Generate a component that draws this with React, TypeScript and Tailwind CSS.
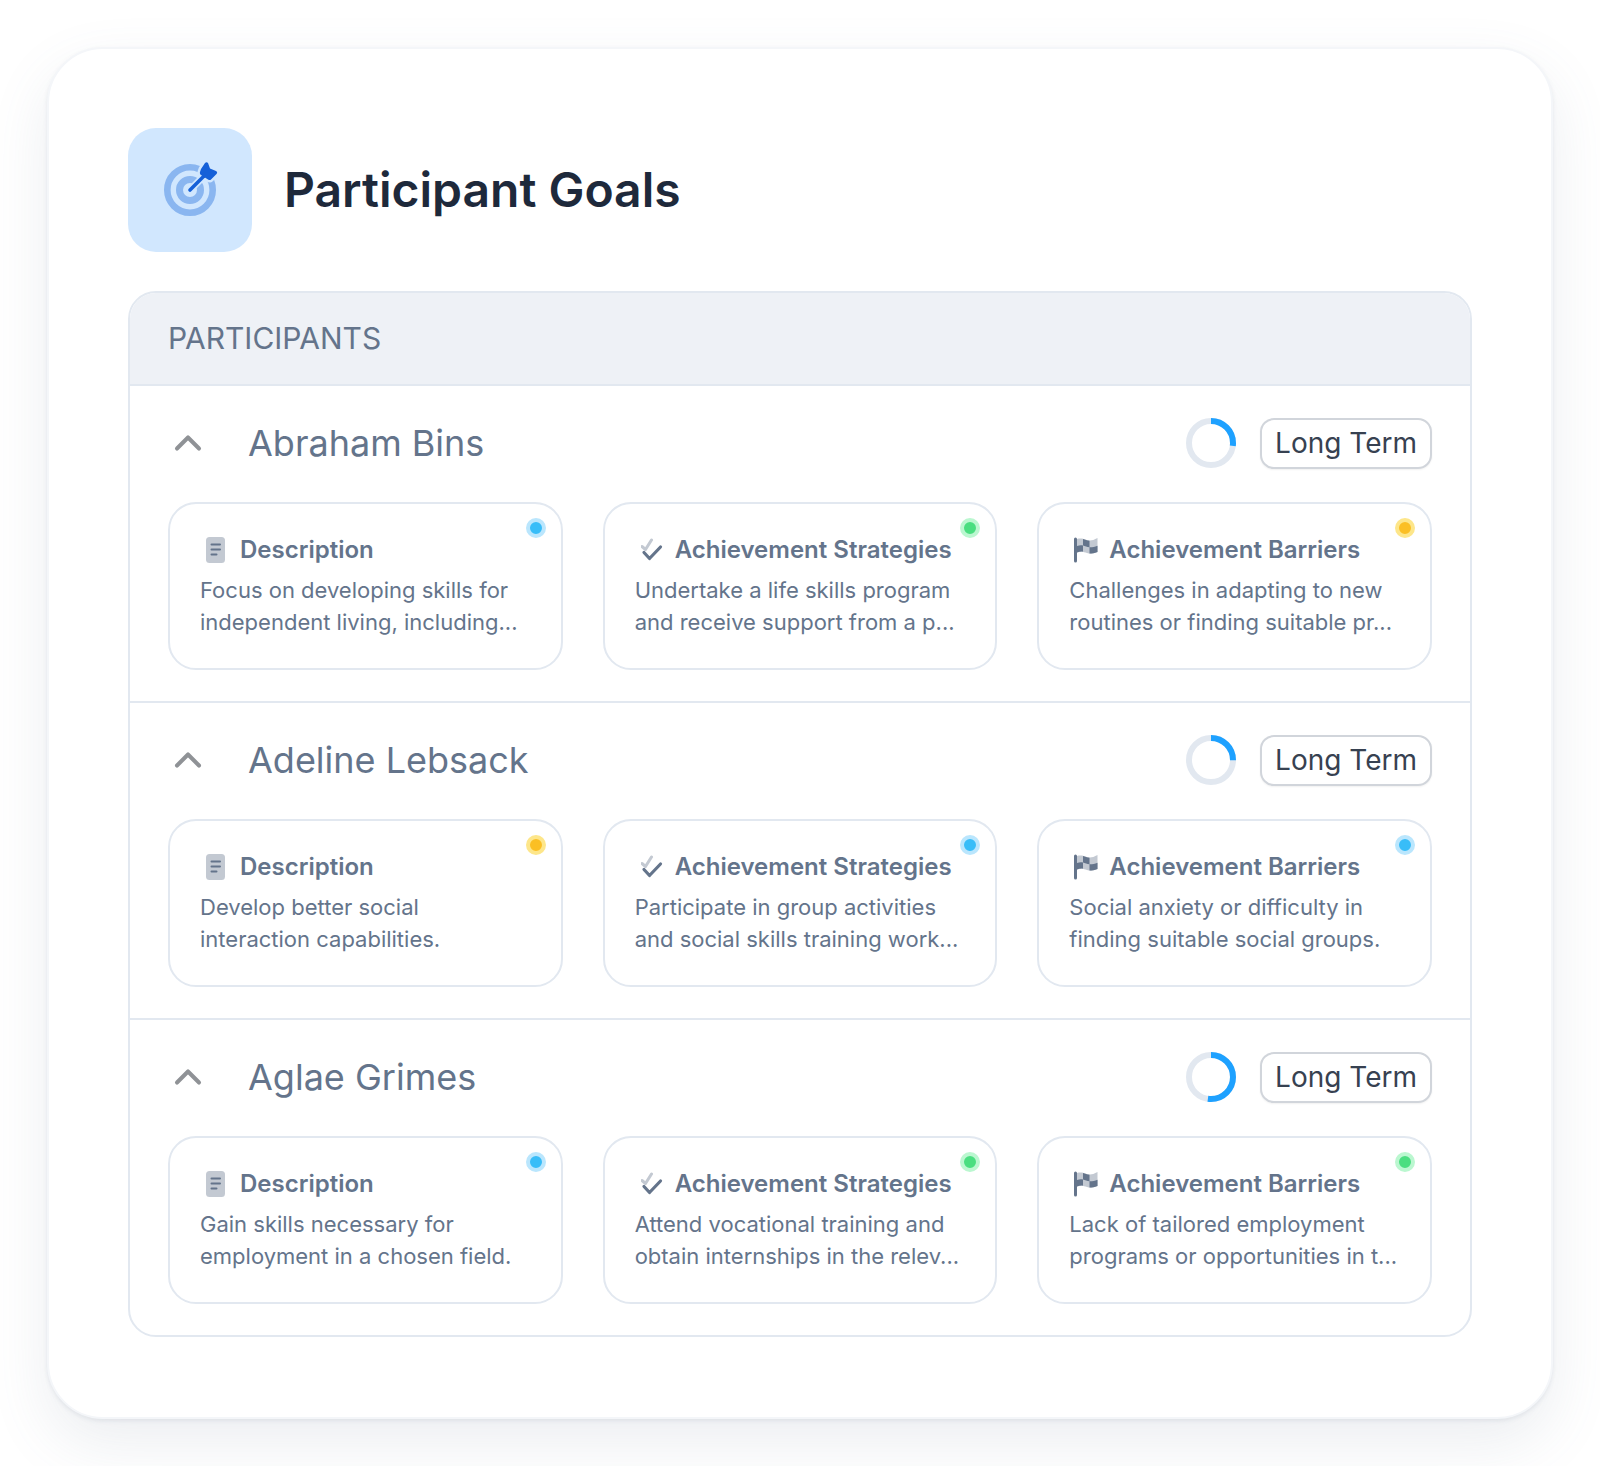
import { ChevronUp } from "lucide-react";

type Tone = "blue" | "green" | "amber";

type Participant = {
  name: string;
  progress: number;
  description: { text: string; tone: Tone };
  strategies: { text: string; tone: Tone };
  barriers: { text: string; tone: Tone };
};

const participants: Participant[] = [
  {
    name: "Abraham Bins",
    progress: 27,
    description: { text: "Focus on developing skills for independent living, including...", tone: "blue" },
    strategies: { text: "Undertake a life skills program and receive support from a p...", tone: "green" },
    barriers: { text: "Challenges in adapting to new routines or finding suitable pr...", tone: "amber" },
  },
  {
    name: "Adeline Lebsack",
    progress: 25,
    description: { text: "Develop better social interaction capabilities.", tone: "amber" },
    strategies: { text: "Participate in group activities and social skills training work...", tone: "blue" },
    barriers: { text: "Social anxiety or difficulty in finding suitable social groups.", tone: "blue" },
  },
  {
    name: "Aglae Grimes",
    progress: 52,
    description: { text: "Gain skills necessary for employment in a chosen field.", tone: "blue" },
    strategies: { text: "Attend vocational training and obtain internships in the relev...", tone: "green" },
    barriers: { text: "Lack of tailored employment programs or opportunities in t...", tone: "green" },
  },
];

const dotClasses: Record<Tone, string> = {
  blue: "bg-[#38bdf8] border-[#bae6fd]",
  green: "bg-[#4ade80] border-[#bbf7d0]",
  amber: "bg-[#fbbf24] border-[#fde68a]",
};

function TargetIcon() {
  return (
    <svg width="56" height="56" viewBox="0 0 56 56" fill="none">
      <circle cx="28" cy="28" r="22.7" stroke="#8ab6f0" strokeWidth="6.6" />
      <circle cx="28" cy="28" r="10.5" stroke="#8ab6f0" strokeWidth="7" />
      <path
        d="M39 7L43 1Q44.5 -0.3 46 1L48 6.5L54 9Q56 10 54.5 12L49 17.5Q48 18.5 46 17.5L39 13Q37.5 12 38 10Z"
        fill="#1560d8"
        stroke="#d1e7fe"
        strokeWidth="5"
      />
      <path d="M28 28L42 14" stroke="#d1e7fe" strokeWidth="7" strokeLinecap="round" />
      <path d="M28 28L42 14" stroke="#1560d8" strokeWidth="3.6" strokeLinecap="round" />
      <path
        d="M39 7L43 1Q44.5 -0.3 46 1L48 6.5L54 9Q56 10 54.5 12L49 17.5Q48 18.5 46 17.5L39 13Q37.5 12 38 10Z"
        fill="#1560d8"
      />
    </svg>
  );
}

function DocIcon() {
  return (
    <svg width="20" height="26" viewBox="0 0 20 26" fill="none">
      <rect x="0" y="0" width="19" height="26" rx="3.5" fill="#c3c9d2" />
      <path d="M5.5 7.5H14M5.5 12.5H14M5.5 17.5H10.5" stroke="#64748b" strokeWidth="2" strokeLinecap="round" />
    </svg>
  );
}

function CheckIcon() {
  return (
    <svg width="22" height="24" viewBox="0 0 22 24" fill="none">
      <path d="M1 8.5L4.5 11.5L10.5 2" stroke="#c3c9d2" strokeWidth="3" strokeLinecap="round" strokeLinejoin="round" />
      <path d="M3 14.5L8.5 20.5L19.5 9" stroke="#64748b" strokeWidth="3.2" strokeLinecap="round" strokeLinejoin="round" />
    </svg>
  );
}

function FlagIcon() {
  return (
    <svg width="26" height="26" viewBox="0 0 26 26" fill="none">
      <path d="M2.5 2V24" stroke="#64748b" strokeWidth="3" strokeLinecap="round" />
      <path d="M4 2C8 1 11 2 14 3C17 4 20 3.5 24.5 1V15C20 17 17 17 14 16C11 15 8 14 4 15.5V2Z" fill="#c3c9d2" />
      <path d="M10 2V8.5C12 9 14 10 16.5 10.3V16.6C19 16.5 21.5 16 24.5 15V8.8C21.5 10 19 10.4 16.5 10.3V3.8C14 3.5 12 2.4 10 2Z" fill="#64748b" />
      <path d="M4 9C6.5 8 8.5 8 10 8.5V14.7C8 14.4 6 14.8 4 15.5V9Z" fill="#64748b" />
    </svg>
  );
}

function ProgressRing({ value }: { value: number }) {
  const r = 22;
  const c = 2 * Math.PI * r;
  return (
    <svg width="50" height="50" viewBox="0 0 50 50" fill="none" className="-rotate-90">
      <circle cx="25" cy="25" r={r} stroke="#e2e8f0" strokeWidth="6" />
      <circle cx="25" cy="25" r={r} stroke="#1ea1ff" strokeWidth="6" strokeDasharray={`${(c * value) / 100} ${c}`} />
    </svg>
  );
}

function InfoCard({
  icon,
  iconClass,
  title,
  text,
  tone,
}: {
  icon: React.ReactNode;
  iconClass: string;
  title: string;
  text: string;
  tone: Tone;
}) {
  return (
    <div className="relative h-[168px] rounded-[28px] border-2 border-[#e2e8f0] bg-white px-[30px] pt-[28px]">
      <span className={`absolute right-[15px] top-[14px] h-[20px] w-[20px] rounded-full border-4 ${dotClasses[tone]}`} />
      <div className="flex h-[36px] items-center">
        <span className={`flex justify-center ${iconClass}`}>{icon}</span>
        <h3 className="text-[24px] font-semibold leading-[36px] text-[#64748b]">{title}</h3>
      </div>
      <p className="mt-[6px] text-[22px] leading-[32px] text-[#64748b]">{text}</p>
    </div>
  );
}

export default function App() {
  return (
    <div className="min-h-[1466px] bg-white px-[47px] pb-[47px] pt-[47px] font-['Inter',sans-serif] [font-optical-sizing:none]">
      <div className="h-[1372px] rounded-[56px] border-2 border-[#f4f6f9] bg-white px-[79px] pt-[79px] shadow-[0_24px_60px_rgba(100,116,139,0.12),0_2px_4px_rgba(100,116,139,0.12)]">
        <div className="flex items-center gap-[32px]">
          <div className="flex h-[124px] w-[124px] items-center justify-center rounded-[28px] bg-[#d1e7fe]">
            <TargetIcon />
          </div>
          <h1 className="text-[48px] font-semibold leading-[60px] text-[#1e293b]">Participant Goals</h1>
        </div>

        <div className="mt-[39px] overflow-hidden rounded-[28px] border-2 border-[#e2e8f0]">
          <div className="flex h-[93px] items-center border-b-2 border-[#e2e8f0] bg-[#eef1f6] px-[38px]">
            <span className="text-[30px] font-normal text-[#64748b]">PARTICIPANTS</span>
          </div>

          {participants.map((p, i) => (
            <div key={p.name} className={`px-[38px] pb-[31px] pt-[32px] ${i > 0 ? "border-t-2 border-[#e2e8f0]" : ""}`}>
              <div className="flex h-[50px] items-center">
                <ChevronUp size={44} strokeWidth={2.2} className="ml-[-2px] text-[#8f9296]" />
                <span className="ml-[38px] text-[36px] font-normal leading-[50px] text-[#64748b]">{p.name}</span>
                <div className="ml-auto flex items-center gap-[24px]">
                  <ProgressRing value={p.progress} />
                  <span className="flex h-[51px] items-center rounded-[14px] border-2 border-[#d1d5db] bg-white px-[13px] text-[28px] text-[#374151] shadow-[0_1px_2px_rgba(0,0,0,0.06)]">
                    Long Term
                  </span>
                </div>
              </div>
              <div className="mt-[34px] grid grid-cols-3 gap-[40px]">
                <InfoCard
                  icon={<DocIcon />}
                  iconClass="ml-[6px] mr-[14px]"
                  title="Description"
                  text={p.description.text}
                  tone={p.description.tone}
                />
                <InfoCard
                  icon={<CheckIcon />}
                  iconClass="ml-[6px] mr-[12px]"
                  title="Achievement Strategies"
                  text={p.strategies.text}
                  tone={p.strategies.tone}
                />
                <InfoCard
                  icon={<FlagIcon />}
                  iconClass="ml-[4px] mr-[10px]"
                  title="Achievement Barriers"
                  text={p.barriers.text}
                  tone={p.barriers.tone}
                />
              </div>
            </div>
          ))}
        </div>
      </div>
    </div>
  );
}
